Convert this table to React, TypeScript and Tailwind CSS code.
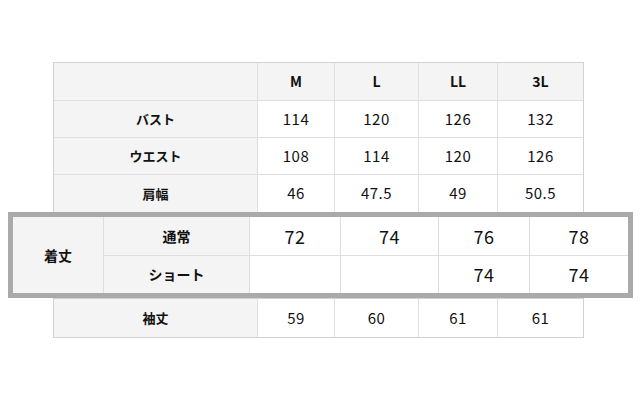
const sizes = ["M", "L", "LL", "3L"];

const topRows = [
  { label: "バスト", values: ["114", "120", "126", "132"], h: "h-[36px]" },
  { label: "ウエスト", values: ["108", "114", "120", "126"], h: "h-[36px]" },
  { label: "肩幅", values: ["46", "47.5", "49", "50.5"], h: "h-[37px]" },
];

const cols = "grid-cols-[203px_76px_83px_78px_85px]";

function Cell({ children, head, className = "" }: { children?: React.ReactNode; head?: boolean; className?: string }) {
  return (
    <div
      className={`flex items-center justify-center ${head ? "bg-[#f4f4f4] font-bold" : "bg-white"} ${className}`}
    >
      {children}
    </div>
  );
}

export default function App() {
  return (
    <div
      className="h-[414px] w-[640px] bg-white pt-[62px] text-[#111]"
      style={{ fontFamily: '"Noto Sans CJK JP", "Noto Sans", sans-serif' }}
    >
      {/* upper sizes */}
      <div className="ml-[53px] w-[531px] border border-b-0 border-[#d2d2d2]">
        <div className={`grid ${cols} gap-px bg-[#e0e0e0] text-[13px]`}>
          <Cell head className="h-[37px]" />
          {sizes.map((s) => (
            <Cell key={s} head className="h-[37px] text-[14px]">
              {s}
            </Cell>
          ))}
          {topRows.map((row) => (
            <div key={row.label} className="contents">
              <Cell head className={row.h}>
                {row.label}
              </Cell>
              {row.values.map((v, i) => (
                <Cell key={i} className={`${row.h} text-[15px] tracking-[0.5px]`}>
                  {v}
                </Cell>
              ))}
            </div>
          ))}
        </div>
      </div>

      {/* length, highlighted */}
      <div className="ml-[8px] w-[625px] border-[5px] border-[#aaaaaa]">
        <div className="grid grid-cols-[90px_145px_90px_97px_90px_98px] grid-rows-[38px_37px] gap-px bg-[#dedede]">
          <Cell head className="row-span-2 text-[14px]">
            着丈
          </Cell>
          <Cell head className="text-[14px]">通常</Cell>
          {["72", "74", "76", "78"].map((v, i) => (
            <Cell key={i} className="text-[18px] tracking-[0.5px]">
              {v}
            </Cell>
          ))}
          <Cell head className="text-[14px]">ショート</Cell>
          {["", "", "74", "74"].map((v, i) => (
            <Cell key={i} className="text-[18px] tracking-[0.5px]">
              {v}
            </Cell>
          ))}
        </div>
      </div>

      {/* sleeve */}
      <div className="ml-[53px] w-[531px] border border-[#d2d2d2]">
        <div className={`grid ${cols} gap-px bg-[#e0e0e0] text-[13px]`}>
          <Cell head className="h-[38px]">袖丈</Cell>
          {["59", "60", "61", "61"].map((v, i) => (
            <Cell key={i} className="h-[38px] text-[15px] tracking-[0.5px]">
              {v}
            </Cell>
          ))}
        </div>
      </div>
    </div>
  );
}
